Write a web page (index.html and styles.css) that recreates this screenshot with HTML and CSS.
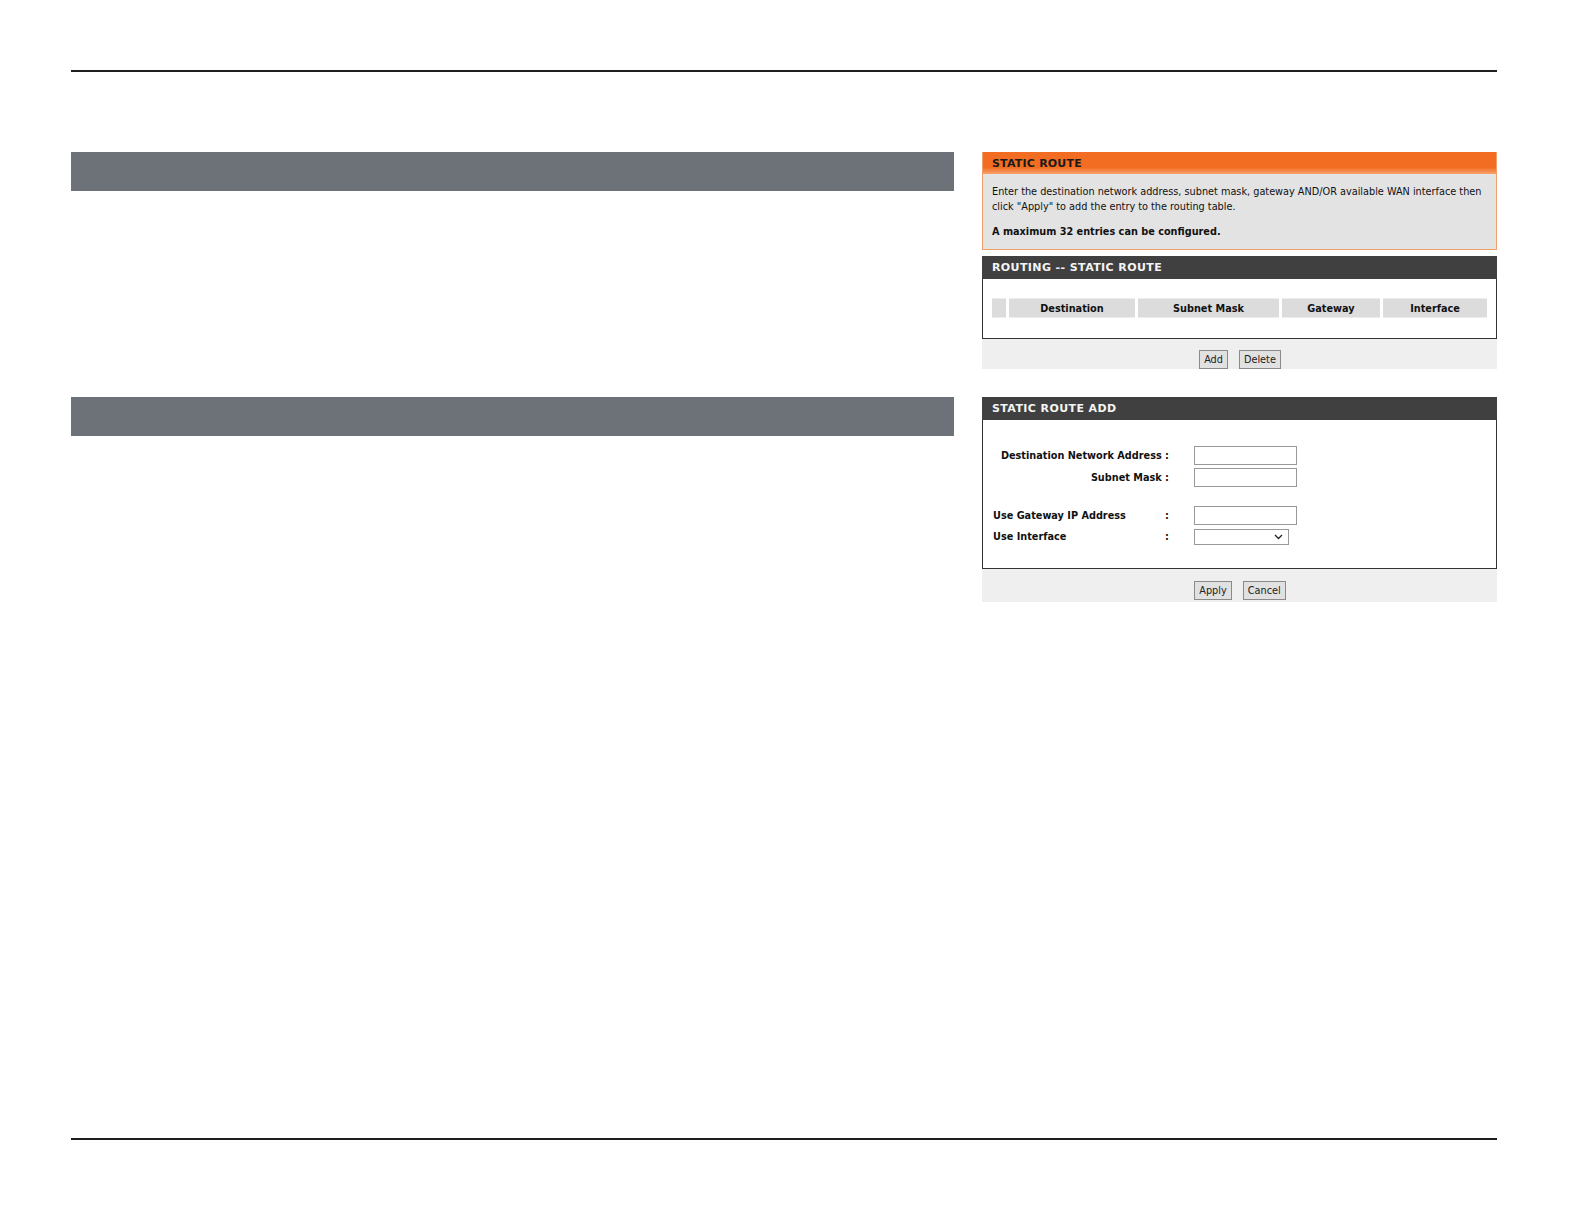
FILE: index.html
```html
<!DOCTYPE html>
<html lang="en">
<head>
  <meta charset="UTF-8" />
  <title>Static Route</title>
  <link rel="stylesheet" href="styles.css">
</head>
<body>
<div class="page">
  <hr class="rule">

  <div class="content">
    <div class="bar"></div>
    <div class="panel">
      <div class="notice">
        <div class="notice-head">STATIC ROUTE</div>
        <div class="notice-body">
          <p>Enter the destination network address, subnet mask, gateway AND/OR available WAN interface then click "Apply" to add the entry to the routing table.</p>
          <p class="strong">A maximum 32 entries can be configured.</p>
        </div>
      </div>

      <div class="box">
        <div class="box-head">ROUTING -- STATIC ROUTE</div>
        <div class="box-body list-body">
          <table class="routes">
            <tr>
              <th class="sel"></th>
              <th class="c-dest">Destination</th>
              <th class="c-mask">Subnet Mask</th>
              <th class="c-gw">Gateway</th>
              <th>Interface</th>
            </tr>
          </table>
        </div>
      </div>
      <div class="actions">
        <button>Add</button>
        <button>Delete</button>
      </div>
    </div>

    <div class="bar"></div>
    <div class="panel">
      <div class="box">
        <div class="box-head">STATIC ROUTE ADD</div>
        <div class="box-body form-body">
          <div class="row right">
            <label>Destination Network Address :</label>
            <input type="text">
          </div>
          <div class="row right">
            <label>Subnet Mask :</label>
            <input type="text">
          </div>
          <div class="row left gap">
            <label>Use Gateway IP Address</label>
            <span class="colon">:</span>
            <input type="text">
          </div>
          <div class="row left">
            <label>Use Interface</label>
            <span class="colon">:</span>
            <span class="select-wrap">
              <select></select>
              <svg class="chevron" width="9" height="6" viewBox="0 0 9 6"><path d="M1 1 L4.5 4.5 L8 1" fill="none" stroke="#222" stroke-width="1.3"/></svg>
            </span>
          </div>
        </div>
      </div>
      <div class="actions lower">
        <button>Apply</button>
        <button>Cancel</button>
      </div>
    </div>
  </div>

  <hr class="rule bottom">
</div>
</body>
</html>
```

FILE: styles.css
```css
body {
  margin: 0;
  background: #fff;
  font-family: "DejaVu Sans Condensed", "DejaVu Sans", sans-serif;
  color: #111;
}
.page {
  height: 1224px;
  box-sizing: border-box;
  padding: 70px 87px 0 71px;
  display: flex;
  flex-direction: column;
}
.rule {
  margin: 0;
  border: none;
  height: 2px;
  background: #1e1e1e;
}
.rule.bottom {
  margin-top: auto;
  margin-bottom: 84px;
}
.content {
  margin-top: 80px;
  display: grid;
  grid-template-columns: 883px 515px;
  column-gap: 28px;
  row-gap: 28px;
  align-items: start;
}
.bar {
  height: 39px;
  background: #6d7279;
}

/* orange notice */
.notice {
  border: 1px solid #f0a068;
  border-top: none;
  background: #e3e3e3;
}
.notice-head {
  height: 22px;
  line-height: 23px;
  padding-left: 9px;
  background: linear-gradient(#f26d21 0, #f26d21 70%, #f6a26c 100%);
  font-family: "DejaVu Sans", sans-serif;
  font-weight: bold;
  font-size: 11px;
  color: #1a1a1a;
  letter-spacing: 0.2px;
}
.notice-body {
  padding: 10px 9px 10px;
  font-size: 10.8px;
  line-height: 15px;
}
.notice-body p {
  margin: 0;
}
.notice-body p.strong {
  margin-top: 10px;
  font-weight: bold;
}

/* dark boxes */
.box {
  margin-top: 6px;
}
.panel > .box:first-child {
  margin-top: 0;
}
.box-head {
  height: 23px;
  line-height: 24px;
  padding-left: 10px;
  background: #404040;
  color: #f4f4f4;
  font-family: "DejaVu Sans", sans-serif;
  font-weight: bold;
  font-size: 11px;
  letter-spacing: 0.4px;
}
.box-body {
  border: 1px solid #333;
  border-top: none;
  background: #fff;
}
.list-body {
  height: 60px;
  padding: 19px 9px 0;
  box-sizing: border-box;
}
.routes {
  border-collapse: separate;
  border-spacing: 3px 0;
  margin: 0 -3px;
  width: calc(100% + 6px);
}
.routes th {
  height: 18px;
  padding: 0;
  background: #dcdcdc;
  font-size: 10.8px;
  font-weight: bold;
  text-align: center;
  border-top: 1px solid #ececec;
  border-bottom: 1px solid #ececec;
}
.routes th.sel { width: 14px; }
.routes th.c-dest { width: 126px; }
.routes th.c-mask { width: 141px; }
.routes th.c-gw { width: 98px; }

.actions {
  height: 30px;
  background: #efefef;
  display: flex;
  justify-content: center;
  align-items: flex-end;
  gap: 11px;
  padding-left: 1px;
}
.actions.lower {
  height: 33px;
  box-sizing: border-box;
  padding-bottom: 2px;
}
.actions button {
  height: 19px;
  padding: 0 4px;
  font-family: "DejaVu Sans Condensed", sans-serif;
  font-size: 10.8px;
  color: #222;
  background: #e1e1e1;
  border: 1px solid #8a8a8a;
  border-radius: 0;
}

/* form */
.form-body {
  height: 149px;
  box-sizing: border-box;
  padding: 24px 0 0 10px;
}
.row {
  display: flex;
  align-items: center;
  height: 22px;
  font-size: 10.8px;
  font-weight: bold;
}
.row.right label {
  width: 176px;
  text-align: right;
}
.row.right input {
  margin-left: 25px;
}
.row.gap {
  margin-top: 17px;
}
.row.left {
  height: 21px;
}
.row.left label {
  width: 172px;
}
.row .colon {
  width: 29px;
}
.row input {
  width: 103px;
  height: 19px;
  box-sizing: border-box;
  border: 1px solid #999;
  margin: 0;
  padding: 0 2px;
}
.select-wrap {
  position: relative;
  display: inline-block;
  height: 16px;
}
.row select {
  appearance: none;
  -webkit-appearance: none;
  width: 95px;
  height: 16px;
  box-sizing: border-box;
  border: 1px solid #999;
  border-radius: 0;
  background: #fff;
  margin: 0;
  display: block;
}
.chevron {
  position: absolute;
  right: 6px;
  top: 5px;
}
```
